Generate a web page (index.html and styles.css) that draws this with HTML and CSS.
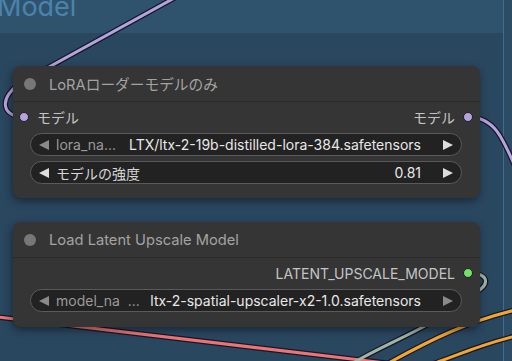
FILE: index.html
```html
<!DOCTYPE html>
<html lang="ja">
<head>
    <meta charset="UTF-8">
    <meta name="viewport" content="width=device-width, initial-scale=1.0">
    <title>LoRA Model Group</title>
    <link rel="stylesheet" href="styles.css">
</head>
<body>
  <div class="canvas">

    <!-- group frame -->
    <div class="group-head"><span class="group-title">Model</span></div>
    <div class="group-edge"></div>

    <!-- links between nodes -->
    <svg class="wires" width="512" height="361" viewBox="0 0 512 361">
      <g class="wire-shade">
        <path d="M24 117 C2 116 -2 100 20 83 L178 -4"/>
        <path d="M468 117 C494 117 502 135 520 178"/>
        <path d="M-10 316 L520 379"/>
        <path d="M468 273 C490 273 492 286 470 295 L440 318 C400 340 370 352 350 365"/>
        <path d="M385 365 C430 340 470 320 520 309"/>
        <path d="M430 365 C470 350 490 342 520 335"/>
      </g>
      <path class="wire purple" d="M24 117 C2 116 -2 100 20 83 L178 -4"/>
      <path class="wire purple" d="M468 117 C494 117 502 135 520 178"/>
      <path class="wire red" d="M-10 316 L520 379"/>
      <path class="wire sage" d="M468 273 C490 273 492 286 470 295 L440 318 C400 340 370 352 350 365"/>
      <path class="wire orange" d="M385 365 C430 340 470 320 520 309"/>
      <path class="wire orange" d="M430 365 C470 350 490 342 520 335"/>
    </svg>

    <!-- LoRA loader -->
    <div class="node node-lora">
      <div class="node-title"><span class="title-dot"></span>LoRAローダーモデルのみ</div>
      <div class="node-body">
        <div class="slots">
          <span class="slot"><i class="dot dot-model"></i>モデル</span>
          <span class="slot">モデル<i class="dot dot-model"></i></span>
        </div>
        <div class="widget">
          <span class="arrow-left dim"></span>
          <span class="w-label">lora_na...</span>
          <span class="w-value">LTX/ltx-2-19b-distilled-lora-384.safetensors</span>
          <span class="arrow-right"></span>
        </div>
        <div class="widget">
          <span class="arrow-left"></span>
          <span class="w-label bright">モデルの強度</span>
          <span class="w-value">0.81</span>
          <span class="arrow-right"></span>
        </div>
      </div>
    </div>

    <!-- upscale model loader -->
    <div class="node node-upscale">
      <div class="node-title"><span class="title-dot"></span>Load Latent Upscale Model</div>
      <div class="node-body">
        <div class="slots">
          <span class="slot"></span>
          <span class="slot">LATENT_UPSCALE_MODEL<i class="dot dot-latent"></i></span>
        </div>
        <div class="widget">
          <span class="arrow-left dim"></span>
          <span class="w-label">model_na &nbsp;...</span>
          <span class="w-value">ltx-2-spatial-upscaler-x2-1.0.safetensors</span>
          <span class="arrow-right dim"></span>
        </div>
      </div>
    </div>

  </div>
</body>
</html>
```

FILE: styles.css
```css
*{
   margin:0;
   padding:0;
   box-sizing: border-box;
}
body{
   background:#2a4760;
   font-family: Inter, "Noto Sans CJK JP", sans-serif;
}
.canvas{
   position:relative;
   width:512px;
   height:361px;
   overflow:hidden;
   background:#2a4760;
}

/* group */
.group-head{
   height:33px;
   background:#30536d;
   overflow:hidden;
}
.group-title{
   display:block;
   margin:-9px 0 0 -3px;
   font-size:27px;
   line-height:32px;
   color:#4a84ad;
}
.group-edge{
   position:absolute;
   top:0;
   left:503px;
   width:9px;
   height:361px;
   border-left:1px solid #3f6d8d;
   background:#2c4b64;
}

/* wires */
.wires{
   position:absolute;
   top:0;
   left:0;
}
.wire-shade path{
   fill:none;
   stroke:#14182a;
   stroke-width:5.5;
   stroke-linecap:round;
}
.wire{
   fill:none;
   stroke-width:3;
   stroke-linecap:round;
}
.purple{ stroke:#b7a3dc; }
.red{ stroke:#ee7474; }
.sage{ stroke:#a2b3a2; }
.orange{ stroke:#f2a533; }

/* nodes */
.node{
   position:absolute;
   left:13px;
   width:467px;
   display:flex;
   flex-direction:column;
   background:#353535;
   border-radius:8px;
   box-shadow: -1px 3px 8px rgba(0,0,0,0.45);
}
.node-lora{
   top:66px;
   height:132px;
}
.node-upscale{
   top:222px;
   height:105px;
}
.node-title{
   height:36px;
   display:flex;
   align-items:center;
   padding-left:11px;
   border-bottom:1px solid #2b2b2b;
   font-size:14.7px;
   color:#a3a3a3;
}
.title-dot{
   width:12px;
   height:12px;
   border-radius:50%;
   background:#777;
   margin-right:13px;
}
.node-body{
   display:flex;
   flex-direction:column;
   gap:6px;
   padding:5px 18px 0 17px;
}
.slots{
   height:20px;
   margin:0 -11px 0 -11px;
   display:flex;
   justify-content:space-between;
   align-items:center;
   font-size:14px;
   color:#c4c4c4;
}
.slot{
   display:flex;
   align-items:center;
   gap:8px;
}
.dot{
   width:10px;
   height:10px;
   border-radius:50%;
   border:1px solid #1d1d2a;
}
.dot-model{ background:#b7a3dc; }
.dot-latent{ background:#72e266; }

/* widgets */
.widget{
   height:23px;
   display:flex;
   align-items:center;
   padding:0 8px;
   background:#222;
   border:1px solid #5a5a5a;
   border-radius:12px;
   font-size:14px;
   white-space:nowrap;
}
.node-body .widget + .widget{
   margin-top:-1px;
}
.arrow-left,
.arrow-right{
   width:0;
   height:0;
   border-top:5.5px solid transparent;
   border-bottom:5.5px solid transparent;
   flex-shrink:0;
}
.arrow-left{
   border-right:10px solid #ddd;
   margin-right:7px;
}
.arrow-right{
   border-left:10px solid #ddd;
}
.arrow-left.dim{ border-right-color:#8a8a8a; }
.arrow-right.dim{ border-left-color:#8a8a8a; }
.w-label{
   color:#9a9a9a;
   flex-shrink:0;
}
.w-label.bright{
   color:#d6d6d6;
}
.w-value{
   flex:1;
   text-align:right;
   overflow:hidden;
   margin:0 22px 0 7px;
   color:#e8e8e8;
}
```
